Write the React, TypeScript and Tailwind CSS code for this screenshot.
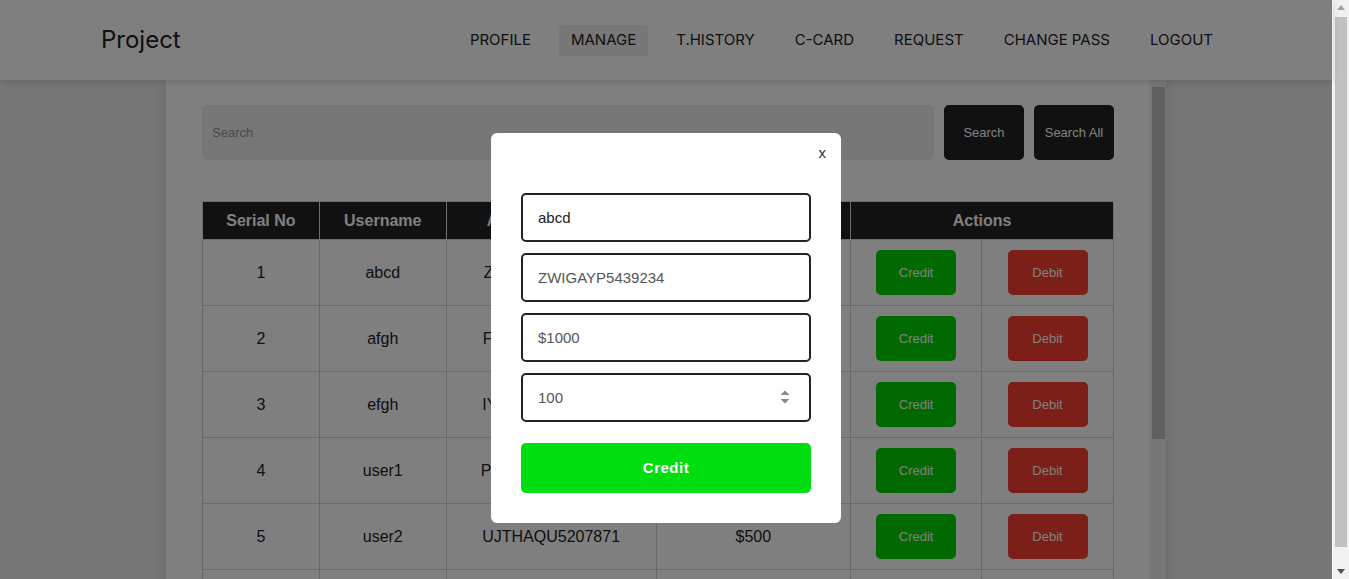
import { useState } from "react";

const rows = [
  { id: 1, user: "abcd", acc: "ZWIGAYP5439234", bal: "$1000" },
  { id: 2, user: "afgh", acc: "FKDLQZN8123456", bal: "$2000" },
  { id: 3, user: "efgh", acc: "IYPWRMT3342981", bal: "$1500" },
  { id: 4, user: "user1", acc: "PXNBOEU6617204", bal: "$800" },
  { id: 5, user: "user2", acc: "UJTHAQU5207871", bal: "$500" },
  { id: 6, user: "user3", acc: "KLMQWEB9912034", bal: "$300" },
  { id: 7, user: "user4", acc: "RTYUOPA4410293", bal: "$1200" },
  { id: 8, user: "user5", acc: "BVCXZAS7765120", bal: "$900" },
];

const links = ["PROFILE", "MANAGE", "T.HISTORY", "C-CARD", "REQUEST", "CHANGE PASS", "LOGOUT"];

const ScrollBar = ({ thumbTop, thumbHeight, upColor, downColor }: { thumbTop: number; thumbHeight: number; upColor: string; downColor: string }) => (
  <div className="relative h-full w-full bg-[#f1f1f1]">
    <svg className="absolute top-[5px] left-1/2 -translate-x-1/2" width="8" height="5" viewBox="0 0 8 5">
      <path d="M0 5 L4 0 L8 5 Z" fill={upColor} />
    </svg>
    <div className="absolute left-[2px] right-[2px] bg-[#c1c1c1]" style={{ top: thumbTop, height: thumbHeight }} />
    <svg className="absolute bottom-[5px] left-1/2 -translate-x-1/2" width="8" height="5" viewBox="0 0 8 5">
      <path d="M0 0 L4 5 L8 0 Z" fill={downColor} />
    </svg>
  </div>
);

const App = () => {
  const [amount, setAmount] = useState("100");

  return (
    <div className="flex h-screen overflow-hidden font-['Liberation_Sans',Arial,sans-serif]">
      <div className="relative flex-1 bg-[#eeeeee]">
        {/* navbar */}
        <div className="relative z-10 h-[80px] bg-white shadow-[0_2px_8px_rgba(0,0,0,0.15)] flex items-center pl-[101px] pr-[107px] font-['Inter',sans-serif] text-[#222]">
          <div className="text-[24px] leading-none">Project</div>
          <div className="ml-auto flex items-center gap-[16px]">
            {links.map((l) => (
              <a
                key={l}
                className={`px-3 h-[31px] flex items-center text-[15px] rounded-[3px] ${l === "MANAGE" ? "bg-[#eeeeee]" : ""}`}
              >
                {l}
              </a>
            ))}
          </div>
        </div>

        {/* card */}
        <div className="mt-[-10px] mx-auto w-[1000px] h-[530px] flex overflow-hidden bg-white shadow-[0_0_12px_rgba(0,0,0,0.12)]">
          <div className="flex-1 px-[36px] pt-[35px] pb-[50px]">
            <div className="flex gap-[10px]">
              <input
                placeholder="Search"
                className="flex-1 h-[55px] bg-[#eeeeee] rounded-[5px] px-[10px] text-[13px] placeholder:text-[#959595] outline-none"
              />
              <button className="w-[80px] h-[55px] bg-[#222] text-white text-[13px] rounded-[5px]">Search</button>
              <button className="w-[80px] h-[55px] bg-[#222] text-white text-[13px] rounded-[5px]">Search All</button>
            </div>

            <table className="mt-[41px] w-[912px] border-collapse text-[16px] text-[#222] text-center">
              <thead>
                <tr className="bg-[#222] text-white h-[38px]">
                  <th className="w-[117px] border border-[#dddddd]">Serial No</th>
                  <th className="w-[127px] border border-[#dddddd]">Username</th>
                  <th className="w-[210px] border border-[#dddddd]">Account Number</th>
                  <th className="w-[195px] border border-[#dddddd]">Balance</th>
                  <th colSpan={2} className="border border-[#dddddd]">Actions</th>
                </tr>
              </thead>
              <tbody>
                {rows.map((r) => (
                  <tr key={r.id} className="h-[66px]">
                    <td className="border border-[#d4d4d4]">{r.id}</td>
                    <td className="border border-[#d4d4d4]">{r.user}</td>
                    <td className="border border-[#d4d4d4]">{r.acc}</td>
                    <td className="border border-[#d4d4d4]">{r.bal}</td>
                    <td className="w-[131px] border border-[#d4d4d4]">
                      <button className="w-[80px] h-[45px] rounded-[5px] bg-[#00d400] text-white text-[13px]">Credit</button>
                    </td>
                    <td className="w-[132px] border border-[#d4d4d4]">
                      <button className="w-[80px] h-[45px] rounded-[5px] bg-[#f63e30] text-white text-[13px]">Debit</button>
                    </td>
                  </tr>
                ))}
              </tbody>
            </table>
          </div>
          <div className="w-[17px] shrink-0">
            <ScrollBar thumbTop={17} thumbHeight={352} upColor="#505050" downColor="#505050" />
          </div>
        </div>

        {/* modal */}
        <div className="absolute inset-0 z-20 bg-black/50 flex justify-center items-start pt-[133px]">
          <div className="relative w-[350px] bg-white rounded-[6px] px-[30px] pt-[60px] pb-[30px]">
            <button className="absolute right-[15px] top-[9px] text-[15px] text-[#333]">x</button>
            <div className="flex flex-col gap-[11px]">
              <input
                defaultValue="abcd"
                className="h-[49px] border-2 border-[#222] rounded-[5px] px-[15px] text-[15px] text-[#222] outline-none"
              />
              <input
                defaultValue="ZWIGAYP5439234"
                className="h-[49px] border-2 border-[#222] rounded-[5px] px-[15px] text-[15px] text-[#555] outline-none"
              />
              <input
                defaultValue="$1000"
                className="h-[49px] border-2 border-[#222] rounded-[5px] px-[15px] text-[15px] text-[#555] outline-none"
              />
              <input
                type="number"
                value={amount}
                onChange={(e) => setAmount(e.target.value)}
                autoFocus
                className="h-[49px] border-2 border-[#222] rounded-[5px] pl-[15px] pr-[16px] text-[15px] text-[#555] outline-none [&::-webkit-inner-spin-button]:opacity-100"
              />
            </div>
            <button className="mt-[21px] w-full h-[50px] rounded-[5px] bg-[#00dd10] text-white text-[15px] font-bold tracking-[0.5px]">
              Credit
            </button>
          </div>
        </div>
      </div>

      {/* page scrollbar */}
      <div className="w-[17px] shrink-0 border-l border-white">
        <ScrollBar thumbTop={17} thumbHeight={530} upColor="#a3a3a3" downColor="#505050" />
      </div>
    </div>
  );
};

export default App;
